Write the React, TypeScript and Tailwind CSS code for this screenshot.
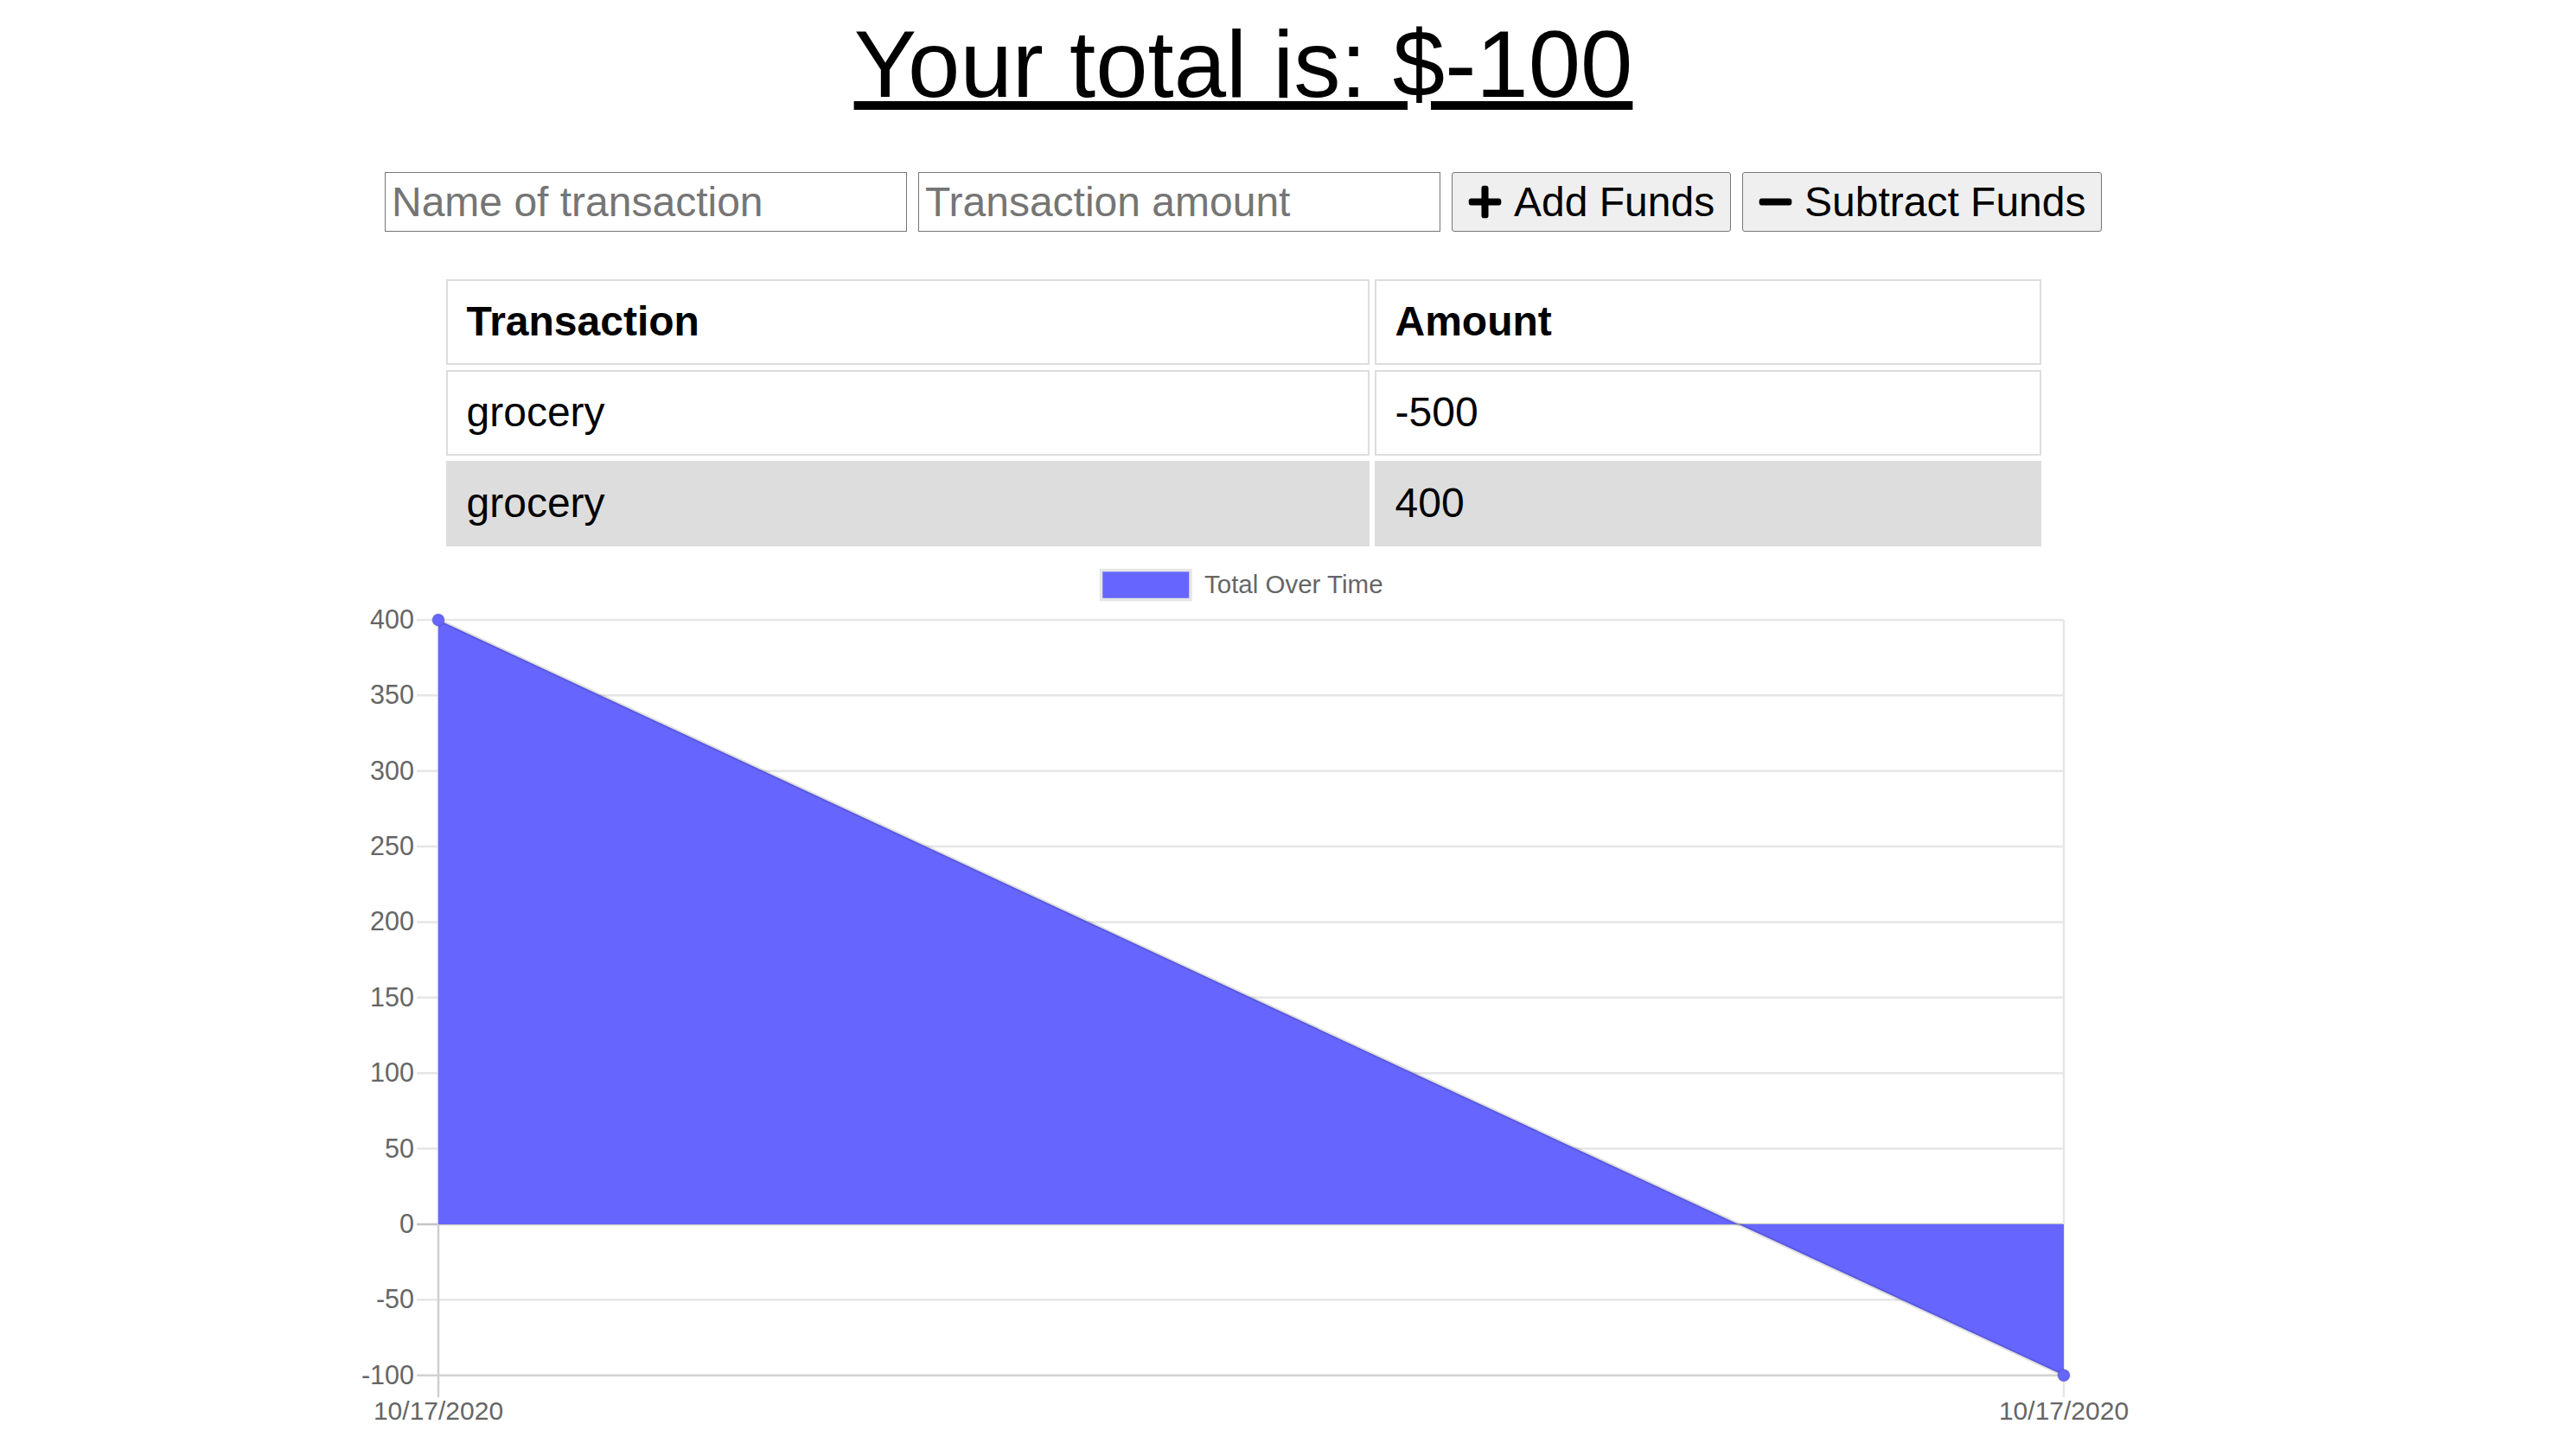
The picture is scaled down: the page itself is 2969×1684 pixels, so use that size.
import React from "react";
import { FaPlus, FaMinus } from "react-icons/fa";

const Y0 = 717;
const STEP = 87.37;
const XL = 507;
const XR = 2387;
const yOf = (v: number) => Y0 + ((400 - v) / 50) * STEP;

function Chart() {
  const ticks = [400, 350, 300, 250, 200, 150, 100, 50, 0, -50, -100];
  const yTop = yOf(400);
  const yZero = yOf(0);
  const yBot = yOf(-100);
  return (
    <svg
      width={2876}
      height={1046}
      viewBox="0 638 2876 1046"
      className="block"
      fontFamily="'Liberation Sans', Arial, sans-serif"
    >
      {/* legend */}
      <rect x={1273.5} y={659.5} width={103.5} height={34} fill="#6666ff" stroke="#e6e6e6" strokeWidth={3.5} />
      <text x={1393} y={686} fontSize={29.5} fill="#666">
        Total Over Time
      </text>

      {/* horizontal grid lines */}
      {ticks.map((v) => {
        const y = yOf(v);
        const color = v === 0 ? "#c4c4c4" : v === -100 ? "#d2d2d2" : "#e6e6e6";
        return <line key={v} x1={482} x2={XR} y1={y} y2={y} stroke={color} strokeWidth={2.5} />;
      })}
      {/* vertical grid lines */}
      <line x1={XL} x2={XL} y1={yTop} y2={1616} stroke="#cfcfcf" strokeWidth={2.5} />
      <line x1={XR} x2={XR} y1={yTop} y2={1616} stroke="#e6e6e6" strokeWidth={2.5} />

      {/* y labels */}
      {ticks.map((v) => (
        <text key={v} x={479} y={yOf(v) + 10} fontSize={30.5} fill="#666" textAnchor="end">
          {v}
        </text>
      ))}

      {/* x labels */}
      <text x={XL} y={1642} fontSize={30} fill="#666" textAnchor="middle">
        10/17/2020
      </text>
      <text x={XR} y={1642} fontSize={30} fill="#666" textAnchor="middle">
        10/17/2020
      </text>

      {/* area */}
      <polygon points={`${XL},${yTop} ${XR},${yBot} ${XR},${yZero} ${XL},${yZero}`} fill="#6666ff" />
      <line x1={XL} y1={yTop} x2={XR} y2={yBot} stroke="rgba(0,0,0,0.12)" strokeWidth={4} />
      <circle cx={XL} cy={yTop} r={7} fill="#6666ff" stroke="rgba(0,0,0,0.1)" strokeWidth={2} />
      <circle cx={XR} cy={yBot} r={7} fill="#6666ff" stroke="rgba(0,0,0,0.1)" strokeWidth={2} />
    </svg>
  );
}

export default function App() {
  const rows = [
    { name: "grocery", amount: "-500", gray: false },
    { name: "grocery", amount: "400", gray: true },
  ];
  return (
    <div className="w-[2876px] min-h-[1684px] bg-white text-black font-['Liberation_Sans',Arial,sans-serif] overflow-hidden">
      <div className="flex justify-center pt-[13px]">
        <h1 className="text-[108.5px] leading-[123px] font-normal underline decoration-[10px] underline-offset-[5px]">
          Your total is: $-100
        </h1>
      </div>

      <div className="flex justify-center gap-[13px] mt-[63px]">
        <input
          type="text"
          placeholder="Name of transaction"
          className="h-[69px] w-[604px] border border-[#767676] bg-white px-[7px] text-[48px] placeholder:text-[#757575] outline-none"
        />
        <input
          type="text"
          placeholder="Transaction amount"
          className="h-[69px] w-[604px] border border-[#767676] bg-white px-[7px] text-[48px] placeholder:text-[#757575] outline-none"
        />
        <button className="h-[69px] w-[323px] flex items-center gap-[12px] pl-[16px] border border-[#767676] bg-[#efefef] rounded-[3px] text-[48px] text-black">
          <FaPlus size={43} />
          <span>Add Funds</span>
        </button>
        <button className="h-[69px] w-[416px] flex items-center gap-[12px] pl-[16px] border border-[#767676] bg-[#efefef] rounded-[3px] text-[48px] text-black">
          <FaMinus size={43} />
          <span>Subtract Funds</span>
        </button>
      </div>

      <div className="flex justify-center mt-[49px]">
        <table className="border-separate border-spacing-[6px] text-[48px] leading-[56px]">
          <thead>
            <tr>
              <th className="w-[1068px] border-2 border-[#dddddd] text-left font-bold pl-[22px] pt-[19px] pb-[20px]">
                Transaction
              </th>
              <th className="w-[771px] border-2 border-[#dddddd] text-left font-bold pl-[22px] pt-[19px] pb-[20px]">
                Amount
              </th>
            </tr>
          </thead>
          <tbody>
            {rows.map((r, i) => (
              <tr key={i}>
                <td
                  className={
                    "border-2 border-[#dddddd] pl-[22px] pt-[19px] pb-[20px] " +
                    (r.gray ? "bg-[#dddddd]" : "bg-white")
                  }
                >
                  {r.name}
                </td>
                <td
                  className={
                    "border-2 border-[#dddddd] pl-[22px] pt-[19px] pb-[20px] " +
                    (r.gray ? "bg-[#dddddd]" : "bg-white")
                  }
                >
                  {r.amount}
                </td>
              </tr>
            ))}
          </tbody>
        </table>
      </div>

      <div>
        <Chart />
      </div>
    </div>
  );
}
